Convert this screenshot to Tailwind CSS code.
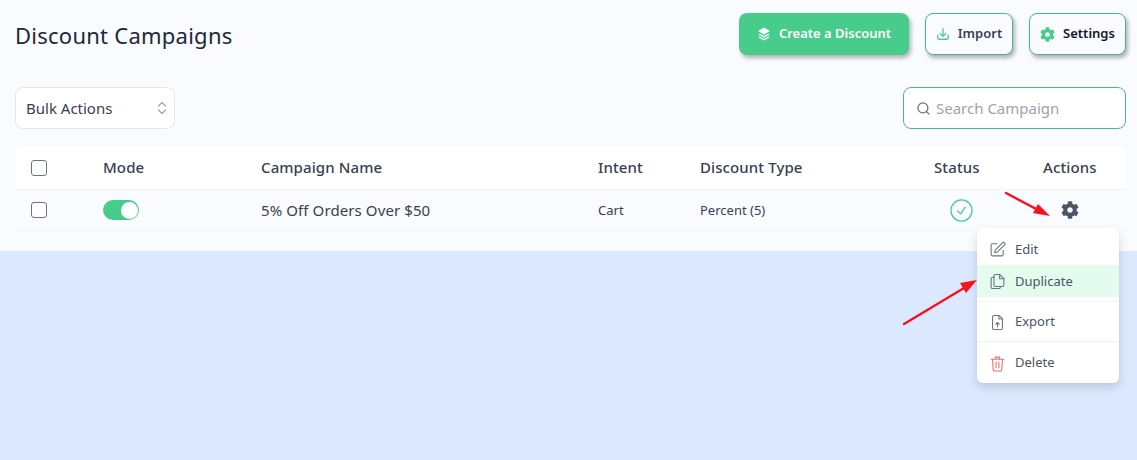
<!DOCTYPE html>
<html lang="en">
<head>
  <meta charset="UTF-8">
  <title>Discount Campaigns</title>
  <script src="https://cdn.jsdelivr.net/npm/@tailwindcss/browser@4"></script>
</head>
<body class="relative h-[460px] w-[1137px] overflow-hidden bg-[#dbe8fe] font-['Noto_Sans',sans-serif] text-[#374151]">
  <div class="h-[251px] bg-[#f9fbfe] pr-[11px] pl-[15px] pt-[13px]">
    <!-- header -->
    <div class="flex h-[42px] items-center">
      <h1 class="pt-[3px] text-[22px] font-normal tracking-[0.25px] text-[#1f2937]">Discount Campaigns</h1>
      <div class="ml-auto flex gap-4 text-[13px] font-semibold">
        <button class="flex h-[42px] w-[170px] items-center justify-center gap-2 rounded-lg bg-[#48cc8b] text-white shadow-[2px_3px_4px_rgba(0,0,0,0.3)]">
          <svg class="h-[14px] w-[14px]" viewBox="0 0 24 24" fill="currentColor"><path d="M12 1 2 7l10 6 10-6z"/><path d="M4.500 11 2 12.500l10 6 10-6-2.500-1.500L12 15.500z" opacity=".9"/><path d="M4.500 16 2 17.500l10 5.500 10-5.500-2.500-1.500L12 20.500z" opacity=".9"/></svg>
          Create a Discount
        </button>
        <button class="flex h-[42px] w-[88px] items-center justify-center gap-2 rounded-lg border border-[#48b98a] bg-[#f9fbfe] text-[#374151] shadow-[2px_3px_4px_rgba(0,0,0,0.3)]">
          <svg class="h-[14px] w-[14px] text-[#48cc8b]" viewBox="0 0 24 24" fill="none" stroke="currentColor" stroke-width="2.200" stroke-linecap="round" stroke-linejoin="round"><path d="M3 14v5a2 2 0 0 0 2 2h14a2 2 0 0 0 2-2v-5"/><path d="M12 3v13M7 11l5 5 5-5"/></svg>
          Import
        </button>
        <button class="flex h-[42px] w-[97px] items-center justify-center gap-2 rounded-lg border border-[#48b98a] bg-[#f9fbfe] text-[#111827] shadow-[2px_3px_4px_rgba(0,0,0,0.3)]">
          <svg class="h-[15px] w-[15px] text-[#48cc8b]" viewBox="0 0 512 512" fill="currentColor"><path d="M487.4 315.7l-42.6-24.6c4.3-23.2 4.3-47 0-70.2l42.6-24.6c4.9-2.8 7.1-8.6 5.5-14-11.1-35.6-30-67.8-54.7-94.6-3.8-4.1-10-5.1-14.8-2.3L380.8 110c-17.9-15.4-38.5-27.3-60.8-35.1V25.800c0-5.600-3.900-10.500-9.400-11.700-36.700-8.200-74.300-7.800-109.200 0-5.500 1.200-9.400 6.100-9.400 11.700V75c-22.200 7.900-42.800 19.800-60.800 35.100L88.700 85.500c-4.900-2.800-11-1.900-14.800 2.300-24.700 26.700-43.600 58.900-54.700 94.600-1.700 5.400.6 11.200 5.500 14L67.300 221c-4.300 23.200-4.300 47 0 70.200l-42.600 24.600c-4.900 2.800-7.100 8.600-5.500 14 11.100 35.600 30 67.800 54.700 94.600 3.800 4.100 10 5.100 14.800 2.300l42.600-24.600c17.900 15.400 38.500 27.300 60.800 35.100v49.200c0 5.600 3.900 10.500 9.400 11.700 36.700 8.200 74.300 7.800 109.200 0 5.500-1.200 9.400-6.100 9.400-11.700v-49.200c22.200-7.900 42.800-19.800 60.800-35.100l42.600 24.600c4.900 2.800 11 1.900 14.800-2.300 24.700-26.700 43.600-58.900 54.700-94.600 1.500-5.500-.7-11.300-5.600-14.100zM256 336c-44.100 0-80-35.900-80-80s35.900-80 80-80 80 35.900 80 80-35.900 80-80 80z"/></svg>
          Settings
        </button>
      </div>
    </div>

    <!-- filters -->
    <div class="mt-8 flex h-[42px] justify-between">
      <div class="flex w-40 items-center justify-between rounded-lg border border-[#e5e7eb] bg-white pr-[7px] pl-[10px] text-[15px] text-[#374151]">
        Bulk Actions
        <svg class="h-[16px] w-[10px] text-[#9ca3af]" viewBox="0 0 10 16" fill="none" stroke="currentColor" stroke-width="1.200" stroke-linecap="round" stroke-linejoin="round"><path d="M1.500 6 5 2.500 8.500 6M1.500 10 5 13.500 8.500 10"/></svg>
      </div>
      <div class="flex w-[223px] items-center gap-[5px] rounded-lg border border-[#48b98a] bg-white px-[12px] text-[15px] text-[#9ca3af]">
        <svg class="h-[15px] w-[15px] text-[#6b7280]" viewBox="0 0 24 24" fill="none" stroke="currentColor" stroke-width="2" stroke-linecap="round"><circle cx="11" cy="11" r="8"/><path d="m21 21-4.300-4.300"/></svg>
        Search Campaign
      </div>
    </div>

    <!-- table -->
    <div class="mt-[17px] w-[1111px]">
      <div class="grid h-[44px] grid-cols-[88px_158px_337px_102px_234px_109px_1fr] items-center rounded-t-lg border-b border-[#f1f3f6] bg-white text-[15px] font-medium tracking-[0.1px] text-[#374151]">
        <div class="pl-[16px]"><span class="block h-4 w-4 rounded-[3px] border border-[#6b7280] bg-white"></span></div>
        <div>Mode</div>
        <div>Campaign Name</div>
        <div>Intent</div>
        <div>Discount Type</div>
        <div>Status</div>
        <div>Actions</div>
      </div>
      <div class="grid h-[41px] grid-cols-[88px_158px_337px_102px_234px_109px_1fr] items-center border-b border-[#f4f6f9] text-[13px] text-[#374151]">
        <div class="pl-[16px]"><span class="block h-4 w-4 rounded-[3px] border border-[#6b7280] bg-white"></span></div>
        <div><span class="flex h-5 w-9 items-center justify-end rounded-full bg-[#48cc8b] pr-[1px]"><span class="h-[17px] w-[17px] rounded-full bg-white"></span></span></div>
        <div class="text-[15px] tracking-[0.1px]">5% Off Orders Over $50</div>
        <div class="pt-[2px]">Cart</div>
        <div class="pt-[2px]">Percent (5)</div>
        <div class="pl-[16px]">
          <svg class="h-[23px] w-[23px] text-[#48cc8b]" viewBox="0 0 24 24" fill="none" stroke="currentColor" stroke-width="1.300"><circle cx="12" cy="12" r="11"/><path d="m8 12.500 3 3 5-7" stroke-linecap="round" stroke-linejoin="round"/></svg>
        </div>
        <div class="pl-[18px]">
          <svg class="h-[18px] w-[18px] text-[#4b5563]" viewBox="0 0 512 512" fill="currentColor"><path d="M487.4 315.7l-42.6-24.6c4.3-23.2 4.3-47 0-70.2l42.6-24.6c4.9-2.8 7.1-8.6 5.5-14-11.1-35.6-30-67.8-54.7-94.6-3.8-4.1-10-5.1-14.8-2.3L380.8 110c-17.9-15.4-38.5-27.3-60.8-35.1V25.800c0-5.600-3.900-10.500-9.400-11.700-36.700-8.200-74.300-7.800-109.200 0-5.500 1.200-9.400 6.100-9.400 11.700V75c-22.200 7.900-42.800 19.800-60.800 35.100L88.700 85.500c-4.900-2.800-11-1.900-14.800 2.300-24.700 26.700-43.600 58.900-54.700 94.600-1.700 5.400.6 11.200 5.500 14L67.300 221c-4.300 23.200-4.300 47 0 70.200l-42.600 24.600c-4.900 2.800-7.100 8.600-5.500 14 11.100 35.600 30 67.800 54.700 94.600 3.800 4.100 10 5.100 14.800 2.300l42.600-24.600c17.900 15.400 38.500 27.300 60.800 35.100v49.200c0 5.600 3.900 10.500 9.400 11.700 36.700 8.200 74.300 7.800 109.200 0 5.500-1.200 9.400-6.100 9.400-11.700v-49.200c22.200-7.900 42.800-19.800 60.800-35.100l42.600 24.600c4.900 2.800 11 1.900 14.800-2.300 24.700-26.700 43.600-58.900 54.700-94.600 1.500-5.500-.7-11.300-5.600-14.100zM256 336c-44.100 0-80-35.900-80-80s35.900-80 80-80 80 35.900 80 80-35.900 80-80 80z"/></svg>
        </div>
      </div>
    </div>
  </div>

  <!-- actions menu -->
  <div class="absolute top-[228px] left-[977px] w-[142px] rounded-md bg-white text-[13px] text-[#4b5563] shadow-[0_4px_10px_rgba(0,0,0,0.15)]">
    <div class="flex h-[37px] items-center gap-[9px] pt-[6px] pl-[12px]">
      <svg class="h-[17px] w-[17px] text-[#6b7280]" viewBox="0 0 24 24" fill="none" stroke="currentColor" stroke-width="1.500" stroke-linecap="round" stroke-linejoin="round"><path d="M11 4H5a2 2 0 0 0-2 2v13a2 2 0 0 0 2 2h13a2 2 0 0 0 2-2v-6"/><path d="M19 2.500a2.100 2.100 0 0 1 3 3L12 15.500l-4 1 1-4z"/></svg>
      Edit
    </div>
    <div class="flex h-[32px] items-center gap-[9px] bg-[#e3fcee] pt-[1px] pl-[12px]">
      <svg class="h-[17px] w-[17px] text-[#6b7280]" viewBox="0 0 24 24" fill="none" stroke="currentColor" stroke-width="1.500" stroke-linecap="round" stroke-linejoin="round"><path d="M9 2h6l6 6v9a2 2 0 0 1-2 2H9a2 2 0 0 1-2-2V4a2 2 0 0 1 2-2z"/><path d="M15 2v6h6"/><path d="M7 6H5a2 2 0 0 0-2 2v12a2 2 0 0 0 2 2h9a2 2 0 0 0 2-2v-1"/></svg>
      Duplicate
    </div>
    <div class="mt-[4px] flex h-[41px] items-center gap-[9px] border-t border-b border-[#f1f3f6] pt-[1px] pl-[12px]">
      <svg class="h-[17px] w-[17px] text-[#6b7280]" viewBox="0 0 24 24" fill="none" stroke="currentColor" stroke-width="1.500" stroke-linecap="round" stroke-linejoin="round"><path d="M14 2H7a2 2 0 0 0-2 2v16a2 2 0 0 0 2 2h10a2 2 0 0 0 2-2V7z"/><path d="M14 2v5h5"/><path d="M12 18v-6M9.500 14.500 12 12l2.500 2.500"/></svg>
      Export
    </div>
    <div class="flex h-[41px] items-center gap-[9px] pt-[1px] pl-[12px]">
      <svg class="h-[17px] w-[17px] text-[#ef6b6b]" viewBox="0 0 24 24" fill="none" stroke="currentColor" stroke-width="1.500" stroke-linecap="round" stroke-linejoin="round"><path d="M3 6h18M9 6V3h6v3M5 6l1 15a1.500 1.500 0 0 0 1.500 1.500h9A1.500 1.500 0 0 0 18 21l1-15M10 10v8M14 10v8"/></svg>
      Delete
    </div>
  </div>

  <!-- annotation arrows -->
  <svg class="pointer-events-none absolute inset-0" width="1137" height="460" viewBox="0 0 1137 460" fill="#f5141e" stroke="#f5141e" stroke-linecap="round">
    <path d="M1006 193 1040 211" stroke-width="2.500" fill="none"/>
    <path d="M1050 216 1033 213 1038 204z" stroke="none"/>
    <path d="M904 324 964 288" stroke-width="2.500" fill="none"/>
    <path d="M977 280 960 283 966 293z" stroke="none"/>
  </svg>
</body>
</html>
